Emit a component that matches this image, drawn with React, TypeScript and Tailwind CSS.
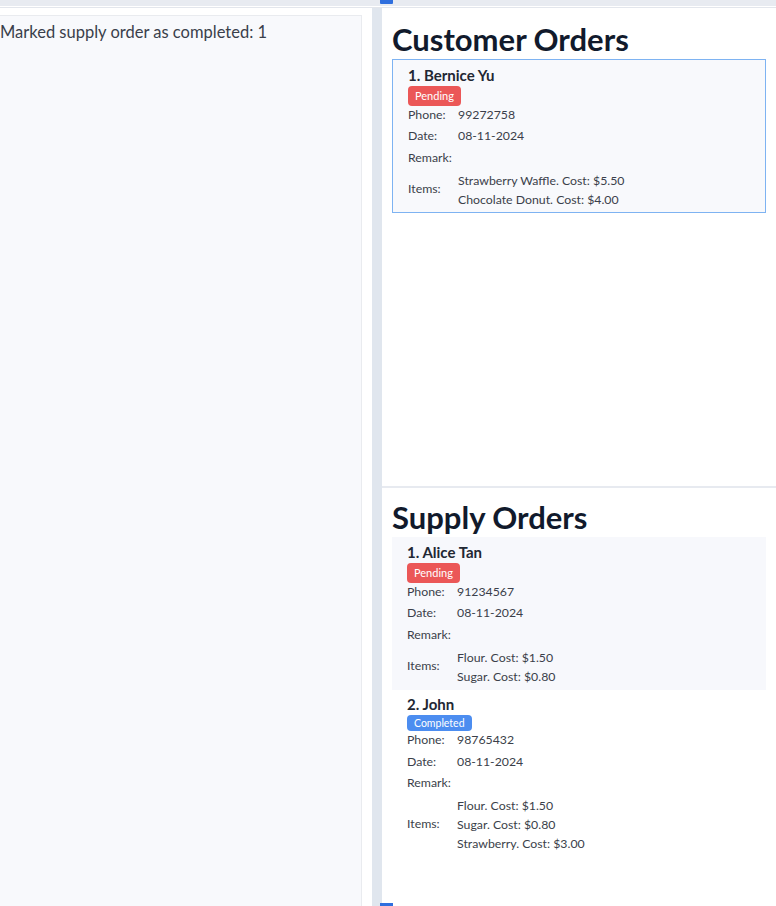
import React from "react";

type Order = {
  name: string;
  status: "Pending" | "Completed";
  phone: string;
  date: string;
  items: string[];
};

const customerOrders: Order[] = [
  {
    name: "1. Bernice Yu",
    status: "Pending",
    phone: "99272758",
    date: "08-11-2024",
    items: ["Strawberry Waffle. Cost: $5.50", "Chocolate Donut. Cost: $4.00"],
  },
];

const supplyOrders: Order[] = [
  {
    name: "1. Alice Tan",
    status: "Pending",
    phone: "91234567",
    date: "08-11-2024",
    items: ["Flour. Cost: $1.50", "Sugar. Cost: $0.80"],
  },
  {
    name: "2. John",
    status: "Completed",
    phone: "98765432",
    date: "08-11-2024",
    items: ["Flour. Cost: $1.50", "Sugar. Cost: $0.80", "Strawberry. Cost: $3.00"],
  },
];

const Row = ({ label, children }: { label: string; children?: React.ReactNode }) => (
  <div className="flex items-center h-[21.5px]">
    <span className="w-[50px] shrink-0">{label}</span>
    <div>{children}</div>
  </div>
);

const OrderCard = ({ order, variant }: { order: Order; variant: "selected" | "shaded" | "plain" }) => {
  const box =
    variant === "selected"
      ? "border border-[#7eb3f2] bg-[#f8f9fc] pl-[15px] pt-[5px] pb-[3px]"
      : variant === "shaded"
      ? "bg-[#f7f8fc] pl-[15px] pt-[5px] pb-[4px]"
      : "pl-[15px] pt-[4px] pb-[4px]";
  const pending = order.status === "Pending";
  return (
    <div className={`${box} text-[12.3px] text-[#3b3f4a]`}>
      <div className="text-[15px] font-bold text-[#222733] leading-[20px]">{order.name}</div>
      <div className={`mt-[1px] flex items-center ${pending ? "h-[20px] mb-[-2px]" : "h-[16px] mb-[-1px]"}`}>
        <span
          className={`inline-block rounded-[4px] px-[7px] text-white ${
            pending ? "bg-[#eb5757] text-[11px] leading-[20px]" : "bg-[#4c8df0] text-[10.5px] leading-[16px]"
          }`}
        >
          {order.status}
        </span>
      </div>
      <Row label="Phone:">{order.phone}</Row>
      <Row label="Date:">{order.date}</Row>
      <Row label="Remark:" />
      <div className="flex items-center mt-[2px]">
        <span className="w-[50px] shrink-0">Items:</span>
        <div className="flex flex-col leading-[19px]">
          {order.items.map((it) => (
            <span key={it}>{it}</span>
          ))}
        </div>
      </div>
    </div>
  );
};

export default function App() {
  return (
    <div className="relative h-[906px] w-[776px] overflow-hidden bg-white font-['Lato','Noto_Sans',sans-serif]">
      <div className="h-[6px] bg-[#e8ebf1]" />
      <div className="h-[2px] border-b border-[#e3e6ec]" />
      <div className="flex h-[898px]">
        <div className="w-[372px] shrink-0 pt-[7px]">
          <div className="h-full w-[362px] border-t border-r border-[#e9ebef] bg-[#f8f9fc] pt-[4px] text-[16.5px] text-[#3a3f4b]">
            Marked supply order as completed: 1
          </div>
        </div>
        <div className="w-[10px] shrink-0 bg-[#e0e6ee]" />
        <div className="flex flex-1 flex-col">
          <section className="h-[480px] border-b-2 border-[#e7eaf0] px-[10px]">
            <h1 className="mt-[13px] mb-[2px] text-[31px] font-bold leading-[36px] text-[#111a2c]">Customer Orders</h1>
            {customerOrders.map((o) => (
              <OrderCard key={o.name} order={o} variant="selected" />
            ))}
          </section>
          <section className="flex-1 px-[10px]">
            <h1 className="mt-[11px] mb-[2px] text-[31px] font-bold leading-[36px] text-[#111a2c]">Supply Orders</h1>
            {supplyOrders.map((o, i) => (
              <OrderCard key={o.name} order={o} variant={i === 0 ? "shaded" : "plain"} />
            ))}
          </section>
        </div>
      </div>
      <div className="absolute left-[380px] top-0 h-[4px] w-[13px] rounded-b-[1px] bg-[#2f6fde]" />
      <div className="absolute left-[380px] bottom-0 h-[3px] w-[13px] bg-[#2f6fde]" />
    </div>
  );
}
